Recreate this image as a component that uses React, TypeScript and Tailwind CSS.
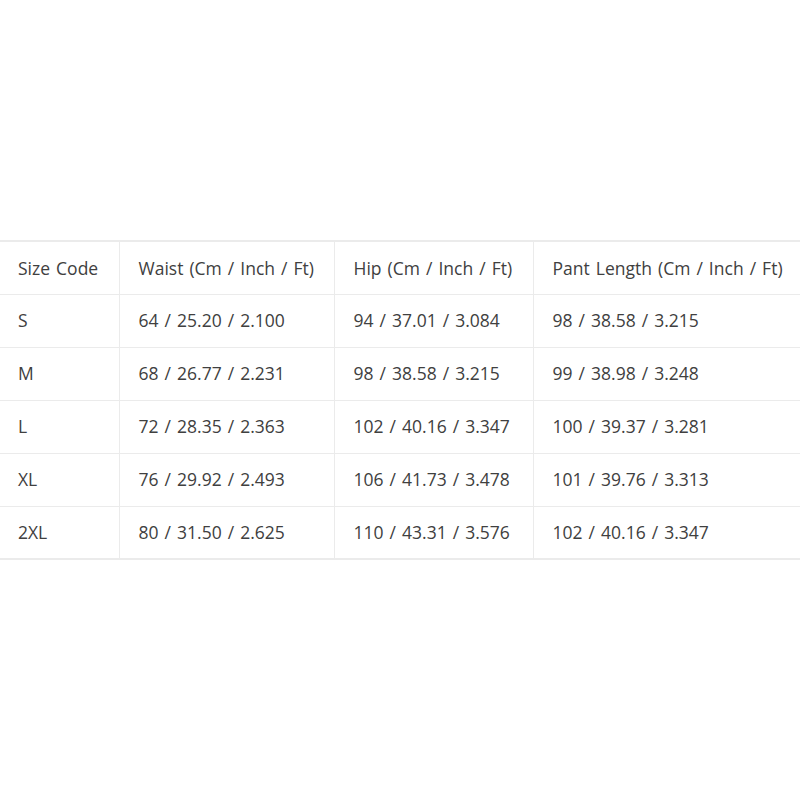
import React from "react";

const headers = ["Size Code", "Waist (Cm / Inch / Ft)", "Hip (Cm / Inch / Ft)", "Pant Length (Cm / Inch / Ft)"];
const rows = [
  ["S", "64 / 25.20 / 2.100", "94 / 37.01 / 3.084", "98 / 38.58 / 3.215"],
  ["M", "68 / 26.77 / 2.231", "98 / 38.58 / 3.215", "99 / 38.98 / 3.248"],
  ["L", "72 / 28.35 / 2.363", "102 / 40.16 / 3.347", "100 / 39.37 / 3.281"],
  ["XL", "76 / 29.92 / 2.493", "106 / 41.73 / 3.478", "101 / 39.76 / 3.313"],
  ["2XL", "80 / 31.50 / 2.625", "110 / 43.31 / 3.576", "102 / 40.16 / 3.347"],
];
const widths = ["w-[119px]", "w-[215px]", "w-[199px]", "w-[267px]"];

export default function App() {
  return (
    <div className="w-[800px] h-[800px] bg-white flex flex-col pt-[240px] font-['Open_Sans',sans-serif] text-[#404040] [word-spacing:1.5px]">
      <table className="w-[800px] table-fixed border-collapse border-t-2 border-b-2 border-[#ebebeb]">
        <colgroup>
          {widths.map((w, i) => (
            <col key={i} className={w} />
          ))}
        </colgroup>
        <thead>
          <tr className="h-[53px] border-b border-[#ebebeb]">
            {headers.map((h, i) => (
              <th
                key={i}
                className={`text-left font-normal text-[17.5px] p-0 whitespace-nowrap ${i > 0 ? "border-l border-[#ebebeb] pl-[19px]" : "pl-[18px]"}`}
              >
                {h}
              </th>
            ))}
          </tr>
        </thead>
        <tbody>
          {rows.map((r, ri) => (
            <tr key={ri} className={`h-[53px] ${ri < rows.length - 1 ? "border-b border-[#ebebeb]" : ""}`}>
              {r.map((c, i) => (
                <td
                  key={i}
                  className={`text-left text-[17.5px] p-0 whitespace-nowrap ${i > 0 ? "border-l border-[#ebebeb] pl-[19px]" : "pl-[18px]"}`}
                >
                  {c}
                </td>
              ))}
            </tr>
          ))}
        </tbody>
      </table>
    </div>
  );
}
